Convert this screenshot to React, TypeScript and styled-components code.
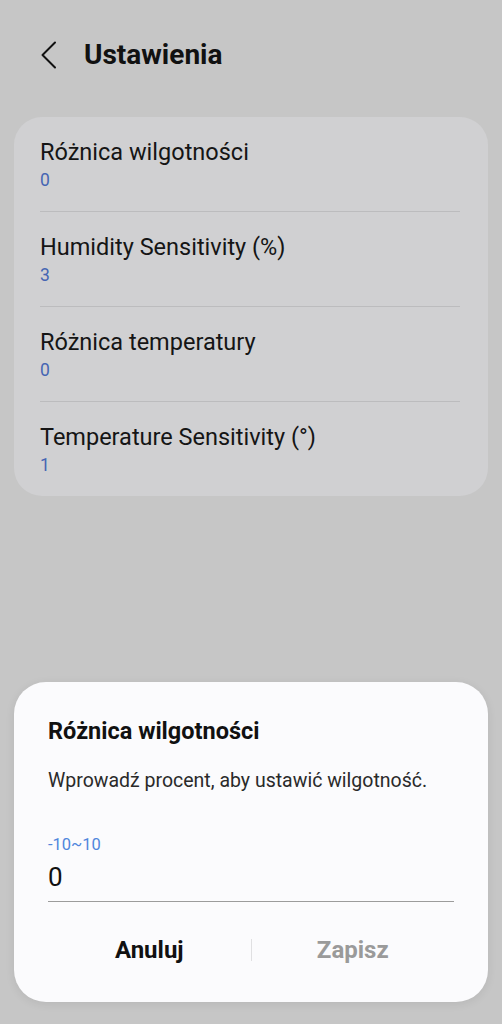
import React from "react";
import styled, { createGlobalStyle } from "styled-components";

const GlobalStyle = createGlobalStyle`
  html, body {
    margin: 0;
    padding: 0;
    background: #c6c6c6;
    font-family: Roboto, "Noto Sans", "Liberation Sans", sans-serif;
  }
  * { box-sizing: border-box; }
`;

const Page = styled.div`
  position: relative;
  width: 502px;
  height: 1024px;
  background: #c6c6c6;
  overflow: hidden;
`;

const Header = styled.header`
  display: flex;
  align-items: center;
  height: 50px;
  margin-top: 30px;
  padding-left: 41px;
  gap: 27px;
`;

const BackButton = styled.button`
  display: flex;
  align-items: center;
  justify-content: center;
  width: 16px;
  height: 30px;
  padding: 0;
  border: none;
  background: none;
`;

const Title = styled.h1`
  margin: 0;
  font-size: 28px;
  line-height: 34px;
  font-weight: 700;
  color: #111;
`;

const Card = styled.section`
  margin: 37px 14px 0;
  padding: 0 28px 0 26px;
  background: #d0d0d2;
  border-radius: 28px;
`;

const Row = styled.div<{ $last?: boolean }>`
  height: ${(p) => (p.$last ? 94 : 95)}px;
  padding-top: 21px;
  border-bottom: ${(p) => (p.$last ? "none" : "1px solid #bcbcbe")};
`;

const RowTitle = styled.div`
  font-size: 23.5px;
  line-height: 28px;
  color: #151515;
`;

const RowValue = styled.div`
  margin-top: 3px;
  font-size: 17.5px;
  line-height: 22px;
  color: #4565b3;
`;

const Dialog = styled.div`
  position: absolute;
  left: 14px;
  right: 14px;
  bottom: 22px;
  padding: 34px 34px 24px;
  background: #fbfbfd;
  border-radius: 32px;
  box-shadow: 0 2px 10px rgba(0, 0, 0, 0.08);
`;

const DialogTitle = styled.h2`
  margin: 0;
  font-size: 23.5px;
  line-height: 30px;
  font-weight: 700;
  color: #111;
`;

const DialogText = styled.p`
  margin: 22px 0 0;
  font-size: 19.5px;
  line-height: 26px;
  color: #2a2a2a;
`;

const RangeLabel = styled.div`
  margin-top: 41px;
  font-size: 16.5px;
  line-height: 20px;
  color: #4f86dc;
`;

const InputField = styled.div`
  margin-top: 6px;
  padding-bottom: 8px;
  border-bottom: 1.5px solid #9c9c9c;
  font-size: 26px;
  line-height: 32px;
  color: #111;
`;

const Actions = styled.div`
  display: flex;
  align-items: center;
  height: 57px;
  margin-top: 19px;
`;

const ActionButton = styled.button<{ $disabled?: boolean }>`
  flex: 1;
  padding: 0;
  border: none;
  background: none;
  font-family: inherit;
  font-size: 24px;
  line-height: 30px;
  font-weight: 700;
  color: ${(p) => (p.$disabled ? "#9a9a9a" : "#111")};
`;

const ActionDivider = styled.div`
  width: 1px;
  height: 22px;
  background: #e0e0e2;
`;

const items = [
  { title: "Różnica wilgotności", value: "0" },
  { title: "Humidity Sensitivity (%)", value: "3" },
  { title: "Różnica temperatury", value: "0" },
  { title: "Temperature Sensitivity (°)", value: "1" },
];

export default function App() {
  return (
    <Page>
      <GlobalStyle />
      <Header>
        <BackButton aria-label="Wstecz">
          <svg width="16" height="28" viewBox="0 0 16 28" fill="none">
            <polyline
              points="14,1.5 1.5,14 14,26.5"
              stroke="#111"
              strokeWidth="2"
              strokeLinecap="round"
              strokeLinejoin="round"
            />
          </svg>
        </BackButton>
        <Title>Ustawienia</Title>
      </Header>
      <Card>
        {items.map((it, i) => (
          <Row key={it.title} $last={i === items.length - 1}>
            <RowTitle>{it.title}</RowTitle>
            <RowValue>{it.value}</RowValue>
          </Row>
        ))}
      </Card>
      <Dialog>
        <DialogTitle>Różnica wilgotności</DialogTitle>
        <DialogText>Wprowadź procent, aby ustawić wilgotność.</DialogText>
        <RangeLabel>-10~10</RangeLabel>
        <InputField>0</InputField>
        <Actions>
          <ActionButton>Anuluj</ActionButton>
          <ActionDivider />
          <ActionButton $disabled>Zapisz</ActionButton>
        </Actions>
      </Dialog>
    </Page>
  );
}
